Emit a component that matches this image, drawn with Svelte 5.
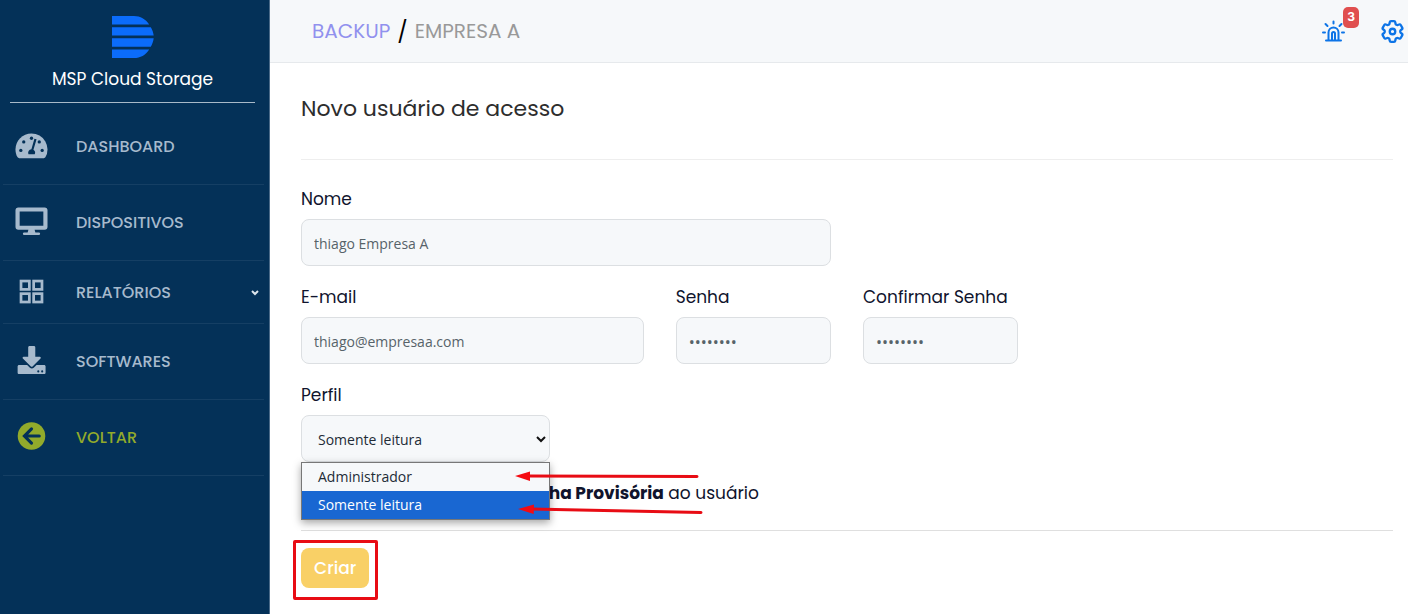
<script>
    let nome = $state('thiago Empresa A');
    let email = $state('thiago@empresaa.com');
    let senha = $state('12345678');
    let confirmar = $state('12345678');
    let perfil = $state('Somente leitura');
    let enviarSenha = $state(false);

    const perfis = ['Administrador', 'Somente leitura'];

    const menu = [
        { label: 'Dashboard', icon: 'gauge' },
        { label: 'Dispositivos', icon: 'desktop' },
        { label: 'Relatórios', icon: 'grid', submenu: true },
        { label: 'Softwares', icon: 'download' },
        { label: 'Voltar', icon: 'back' }
    ];
</script>

{#snippet menuIcon(name)}
    <svg class="icon" viewBox="0 0 34 34" fill="currentColor" aria-hidden="true">
        {#if name === 'gauge'}
            <path d="M17 3.500C7.800 3.500.5 10.800.5 20c0 3 .8 5.800 2.200 8.200.4.600.9.800 1.500.800h25.600c.6 0 1.100-.2 1.500-.8A16.500 16.500 0 0 0 17 3.500z" />
            <g fill="#043158">
                <circle cx="17" cy="8.500" r="1.700" />
                <circle cx="9" cy="12.300" r="1.700" />
                <circle cx="25" cy="12.300" r="1.700" />
                <circle cx="6" cy="21" r="1.700" />
                <circle cx="28" cy="21" r="1.700" />
                <path d="M20 8.900l2.200.6-3.200 10.900a3.600 3.600 0 0 1 1.300 4.600h-6.400a3.600 3.600 0 0 1 3-5.200z" />
            </g>
        {:else if name === 'desktop'}
            <path fill-rule="evenodd" d="M3.500 1.500h27a3 3 0 0 1 3 3v17a3 3 0 0 1-3 3H20.200l.8 2.700h3.500a1.400 1.400 0 0 1 0 2.800h-15a1.400 1.400 0 0 1 0-2.800H13l.8-2.700H3.500a3 3 0 0 1-3-3v-17a3 3 0 0 1 3-3zM4.800 5.700v14.600h24.400V5.700z" />
        {:else if name === 'grid'}
            <g fill="none" stroke="currentColor" stroke-width="2.800">
                <rect x="6.200" y="5.200" width="8.600" height="8.600" />
                <rect x="19.200" y="5.200" width="8.600" height="8.600" />
                <rect x="6.200" y="18.200" width="8.600" height="8.600" />
                <rect x="19.200" y="18.200" width="8.600" height="8.600" />
            </g>
        {:else if name === 'download'}
            <path d="M15 1h4.500c.8 0 1.400.600 1.400 1.400V12h4.600c1 0 1.500 1.200.8 1.900l-8.200 8.200c-.5.500-1.200.500-1.700 0L8.100 13.900c-.7-.7-.2-1.900.8-1.900h4.700V2.400c0-.8.600-1.400 1.400-1.400z" />
            <path fill-rule="evenodd" d="M4.200 20.500h8.300l2.900 2.900c1.100 1.100 2.800 1.100 3.900 0l2.900-2.900H30c.9 0 1.500.700 1.500 1.500v6.500c0 .8-.6 1.500-1.500 1.500H4.200c-.9 0-1.500-.7-1.500-1.500V22c0-.8.600-1.500 1.500-1.500zM24 26.100a1.100 1.100 0 1 0 0 2.200 1.100 1.100 0 0 0 0-2.200zM28 26.100a1.100 1.100 0 1 0 0 2.200 1.100 1.100 0 0 0 0-2.200z" />
        {:else}
            <circle cx="17" cy="15.500" r="14.200" />
            <path d="M25 15.500H10.500M17 8.200L9.700 15.500l7.300 7.300" fill="none" stroke="#043158" stroke-width="3.200" stroke-linecap="round" />
        {/if}
    </svg>
{/snippet}

<div class="layout">
    <aside class="sidebar">
        <div class="brand">
            <svg class="logo" viewBox="0 0 42 42" fill="#0b6cfb" aria-hidden="true">
                <path d="M0 0h22c6.500 0 11.500 3 15.200 8.500H0zM0 11.200h38.800c1.600 2.600 2.500 5.400 2.900 8.300H0zM0 22.300h41.700c-.4 3-1.300 5.800-2.900 8.400H0zM0 33.400h37.200C33.500 39 28.500 42 22 42H0z" />
            </svg>
            <div class="brand-name">MSP Cloud Storage</div>
        </div>

        <nav>
            {#each menu as item}
                <a href="#{item.icon}" class="item" class:short={item.submenu} class:back={item.icon === 'back'}>
                    {@render menuIcon(item.icon)}
                    <span>{item.label}</span>
                    {#if item.submenu}
                        <svg class="caret" viewBox="0 0 10 8" aria-hidden="true"><path d="M2 3l3 3 3-3" /></svg>
                    {/if}
                </a>
            {/each}
        </nav>
    </aside>

    <div class="page">
        <header class="topbar">
            <div class="crumbs">
                <a href="#backup">BACKUP</a>
                <span class="slash">/</span>
                <span>EMPRESA A</span>
            </div>
            <div class="actions">
                <button class="action" aria-label="Alertas">
                    <svg viewBox="0 0 23 23" aria-hidden="true">
                        <path d="M4 20.500h15M6.500 20v-7.500a5 5 0 0 1 10 0V20M10 20v-6.500a1.500 1.500 0 0 1 3 0V20M11.500 1.500v2M3.500 4l2 2M19.500 4l-2 2M1 12.500h2M20 12.500h2" />
                    </svg>
                    <span class="badge">3</span>
                </button>
                <button class="action" aria-label="Configurações">
                    <svg viewBox="2 2 20 20" aria-hidden="true">
                        <path d="M9.594 3.940c.09-.542.560-.940 1.110-.940h2.593c.550 0 1.020.398 1.110.940l.213 1.281c.063.374.313.686.645.870.074.040.147.083.220.127.325.196.720.257 1.075.124l1.217-.456a1.125 1.125 0 0 1 1.370.490l1.296 2.247a1.125 1.125 0 0 1-.260 1.431l-1.003.827c-.293.241-.438.613-.430.992a7.723 7.723 0 0 1 0 .255c-.008.378.137.750.430.991l1.004.827c.424.350.534.955.260 1.430l-1.298 2.247a1.125 1.125 0 0 1-1.369.491l-1.217-.456c-.355-.133-.750-.072-1.076.124a6.470 6.470 0 0 1-.220.128c-.331.183-.581.495-.644.869l-.213 1.281c-.090.543-.560.940-1.110.940h-2.594c-.550 0-1.019-.398-1.110-.940l-.213-1.281c-.062-.374-.312-.686-.644-.870a6.520 6.520 0 0 1-.220-.127c-.325-.196-.720-.257-1.076-.124l-1.217.456a1.125 1.125 0 0 1-1.369-.490l-1.297-2.247a1.125 1.125 0 0 1 .260-1.431l1.004-.827c.292-.240.437-.613.430-.991a6.932 6.932 0 0 1 0-.255c.007-.380-.138-.751-.430-.992l-1.004-.827a1.125 1.125 0 0 1-.260-1.430l1.297-2.247a1.125 1.125 0 0 1 1.370-.491l1.216.456c.356.133.751.072 1.076-.124.072-.044.146-.086.220-.128.332-.183.582-.495.644-.869l.214-1.280z" />
                        <circle cx="12" cy="12" r="2.400" />
                    </svg>
                </button>
            </div>
        </header>

        <main>
            <h1>Novo usuário de acesso</h1>

            <form onsubmit={(e) => e.preventDefault()}>
                <div class="field nome">
                    <label for="nome">Nome</label>
                    <input id="nome" type="text" bind:value={nome} />
                </div>
                <div class="field email">
                    <label for="email">E-mail</label>
                    <input id="email" type="email" bind:value={email} />
                </div>
                <div class="field senha">
                    <label for="senha">Senha</label>
                    <input id="senha" type="password" bind:value={senha} />
                </div>
                <div class="field senha">
                    <label for="confirmar">Confirmar Senha</label>
                    <input id="confirmar" type="password" bind:value={confirmar} />
                </div>
                <div class="field perfil">
                    <label for="perfil">Perfil</label>
                    <div class="select-wrap">
                        <select id="perfil" bind:value={perfil}>
                            {#each perfis as p}
                                <option>{p}</option>
                            {/each}
                        </select>
                        <svg class="select-arrow" viewBox="0 0 12 8" aria-hidden="true"><path d="M2 2l4 4 4-4" /></svg>
                        <ul class="options" role="listbox" aria-label="Perfil">
                            {#each perfis as p}
                                <li role="option" aria-selected={p === perfil} class:selected={p === perfil}>{p}</li>
                            {/each}
                        </ul>
                        <svg class="arrows" viewBox="0 0 190 48" aria-hidden="true">
                            <path class="line" d="M12 8L182 8.500M16 41L186 44.500" />
                            <path d="M0 8L15 3.500v9.500zM3 41l16-4.500-.300 9.500z" />
                        </svg>
                    </div>
                </div>

                <div class="check">
                    <input id="enviar" type="checkbox" bind:checked={enviarSenha} />
                    <label for="enviar">Mostrar <b>Senha Provisória</b> ao usuário</label>
                </div>

                <div class="footer">
                    <div class="highlight">
                        <button class="criar" type="submit">Criar</button>
                    </div>
                </div>
            </form>
        </main>
    </div>
</div>

<style>
    :global(body) { margin: 0; background: #fff; }

    .layout { display: flex; min-height: 100vh; font-family: Poppins, Inter, sans-serif; color: #10142d; }
    .layout * { box-sizing: border-box; }
    a { text-decoration: none; }

    .sidebar { flex: 0 0 270px; background: #043158; border-right: 1px solid #4a6a88; }
    .brand { display: flex; flex-direction: column; align-items: center; gap: 10px; margin: 0 14px 6px 10px; padding: 16px 0 12px; border-bottom: 1px solid #a9bac9; }
    .logo { width: 42px; height: 42px; }
    .brand-name { font-size: 17px; line-height: 22px; color: #fff; }

    .item { display: flex; align-items: center; height: 76px; margin: 0 5px 0 3px; padding-left: 12px; border-bottom: 1px solid #153f64; color: #a7bacd; font-size: 16px; font-weight: 500; text-transform: uppercase; }
    .item.short { height: 63px; }
    .item.back { color: #92aa2b; }
    .icon { width: 33px; height: 33px; margin-right: 28px; }
    .caret { width: 10px; height: 8px; margin-left: auto; margin-right: 4px; fill: none; stroke: #dde6ee; stroke-width: 2; }

    .page { flex: 1; min-width: 0; }
    .topbar { display: flex; justify-content: space-between; align-items: center; height: 63px; padding: 0 4px 0 42px; background: #f6f8fa; border-bottom: 1px solid #e6e9ec; }
    .crumbs { display: flex; align-items: center; gap: 7px; font-size: 20px; color: #999; }
    .crumbs a { color: #9191ee; }
    .slash { font-size: 22px; color: #000; }

    .actions { display: flex; gap: 36px; }
    .action { position: relative; display: flex; padding: 0; border: 0; background: none; cursor: pointer; }
    .action svg { width: 23px; height: 23px; fill: none; stroke: #0d74e7; stroke-width: 2; stroke-linecap: round; stroke-linejoin: round; }
    .badge { position: absolute; top: -13px; right: -14px; width: 16px; height: 21px; border-radius: 5px; background: #e04f4f; color: #fff; font: bold 12px/20px Inter, sans-serif; text-align: center; }

    main { padding: 29px 15px 14px 31px; }
    h1 { margin: 0 0 26px; padding-bottom: 33px; border-bottom: 1px solid #eee; font-size: 22px; line-height: 34px; font-weight: 400; color: #2d2d2d; }

    form { display: grid; grid-template-columns: repeat(12, 1fr); column-gap: 32px; row-gap: 18px; }
    .field { display: flex; flex-direction: column; gap: 7px; min-width: 0; }
    .nome { grid-column: 1 / span 6; }
    .email { grid-column: 1 / span 4; }
    .senha { grid-column: span 2; }
    .perfil { grid-column: 1 / span 3; }
    label { font-size: 17px; line-height: 26px; white-space: nowrap; }

    .field input, select { width: 100%; height: 47px; padding: 2px 12px 0; border: 1px solid #dcdfe2; border-radius: 8px; background: #f6f8fa; color: #576369; font: 14px "Open Sans", sans-serif; }
    .field input[type='password'] { font-size: 16px; }
    .select-wrap { position: relative; }
    select { display: block; appearance: none; padding: 2px 16px 0; color: #222b36; }
    .select-arrow { position: absolute; top: 20px; right: 3px; width: 12px; height: 8px; fill: none; stroke: #111; stroke-width: 2; }

    .options { position: absolute; z-index: 1; top: 47px; left: 0; right: 0; margin: 0; padding: 0; list-style: none; border: 1px solid #777; background: #f6f8fa; box-shadow: 0 3px 8px rgba(0, 0, 0, 0.35); font: 14px/28px "Open Sans", sans-serif; color: #222b36; }
    .options li { padding-left: 16px; }
    .options .selected { background: #1967d2; color: #fff; }
    .arrows { position: absolute; z-index: 2; top: 53px; left: 214px; width: 190px; height: 48px; fill: #f40b12; }
    .arrows .line { fill: none; stroke: #e80c14; stroke-width: 3; stroke-linecap: round; }

    .check { grid-column: 1 / -1; display: flex; align-items: center; gap: 10px; padding-left: 120px; }
    .check input { width: 16px; height: 16px; margin: 0; }

    .footer { grid-column: 1 / -1; margin-top: 6px; padding-top: 9px; border-top: 1px solid #dfdfdf; }
    .highlight { width: max-content; margin-left: -8px; padding: 5px 6px 9px 5px; border: 3px solid #e80c14; border-radius: 2px; }
    .criar { display: block; height: 40px; padding: 0 13px; border: 0; border-radius: 8px; background: #f9d066; color: #fff; font: 500 17px Poppins, Inter, sans-serif; cursor: pointer; }
</style>
